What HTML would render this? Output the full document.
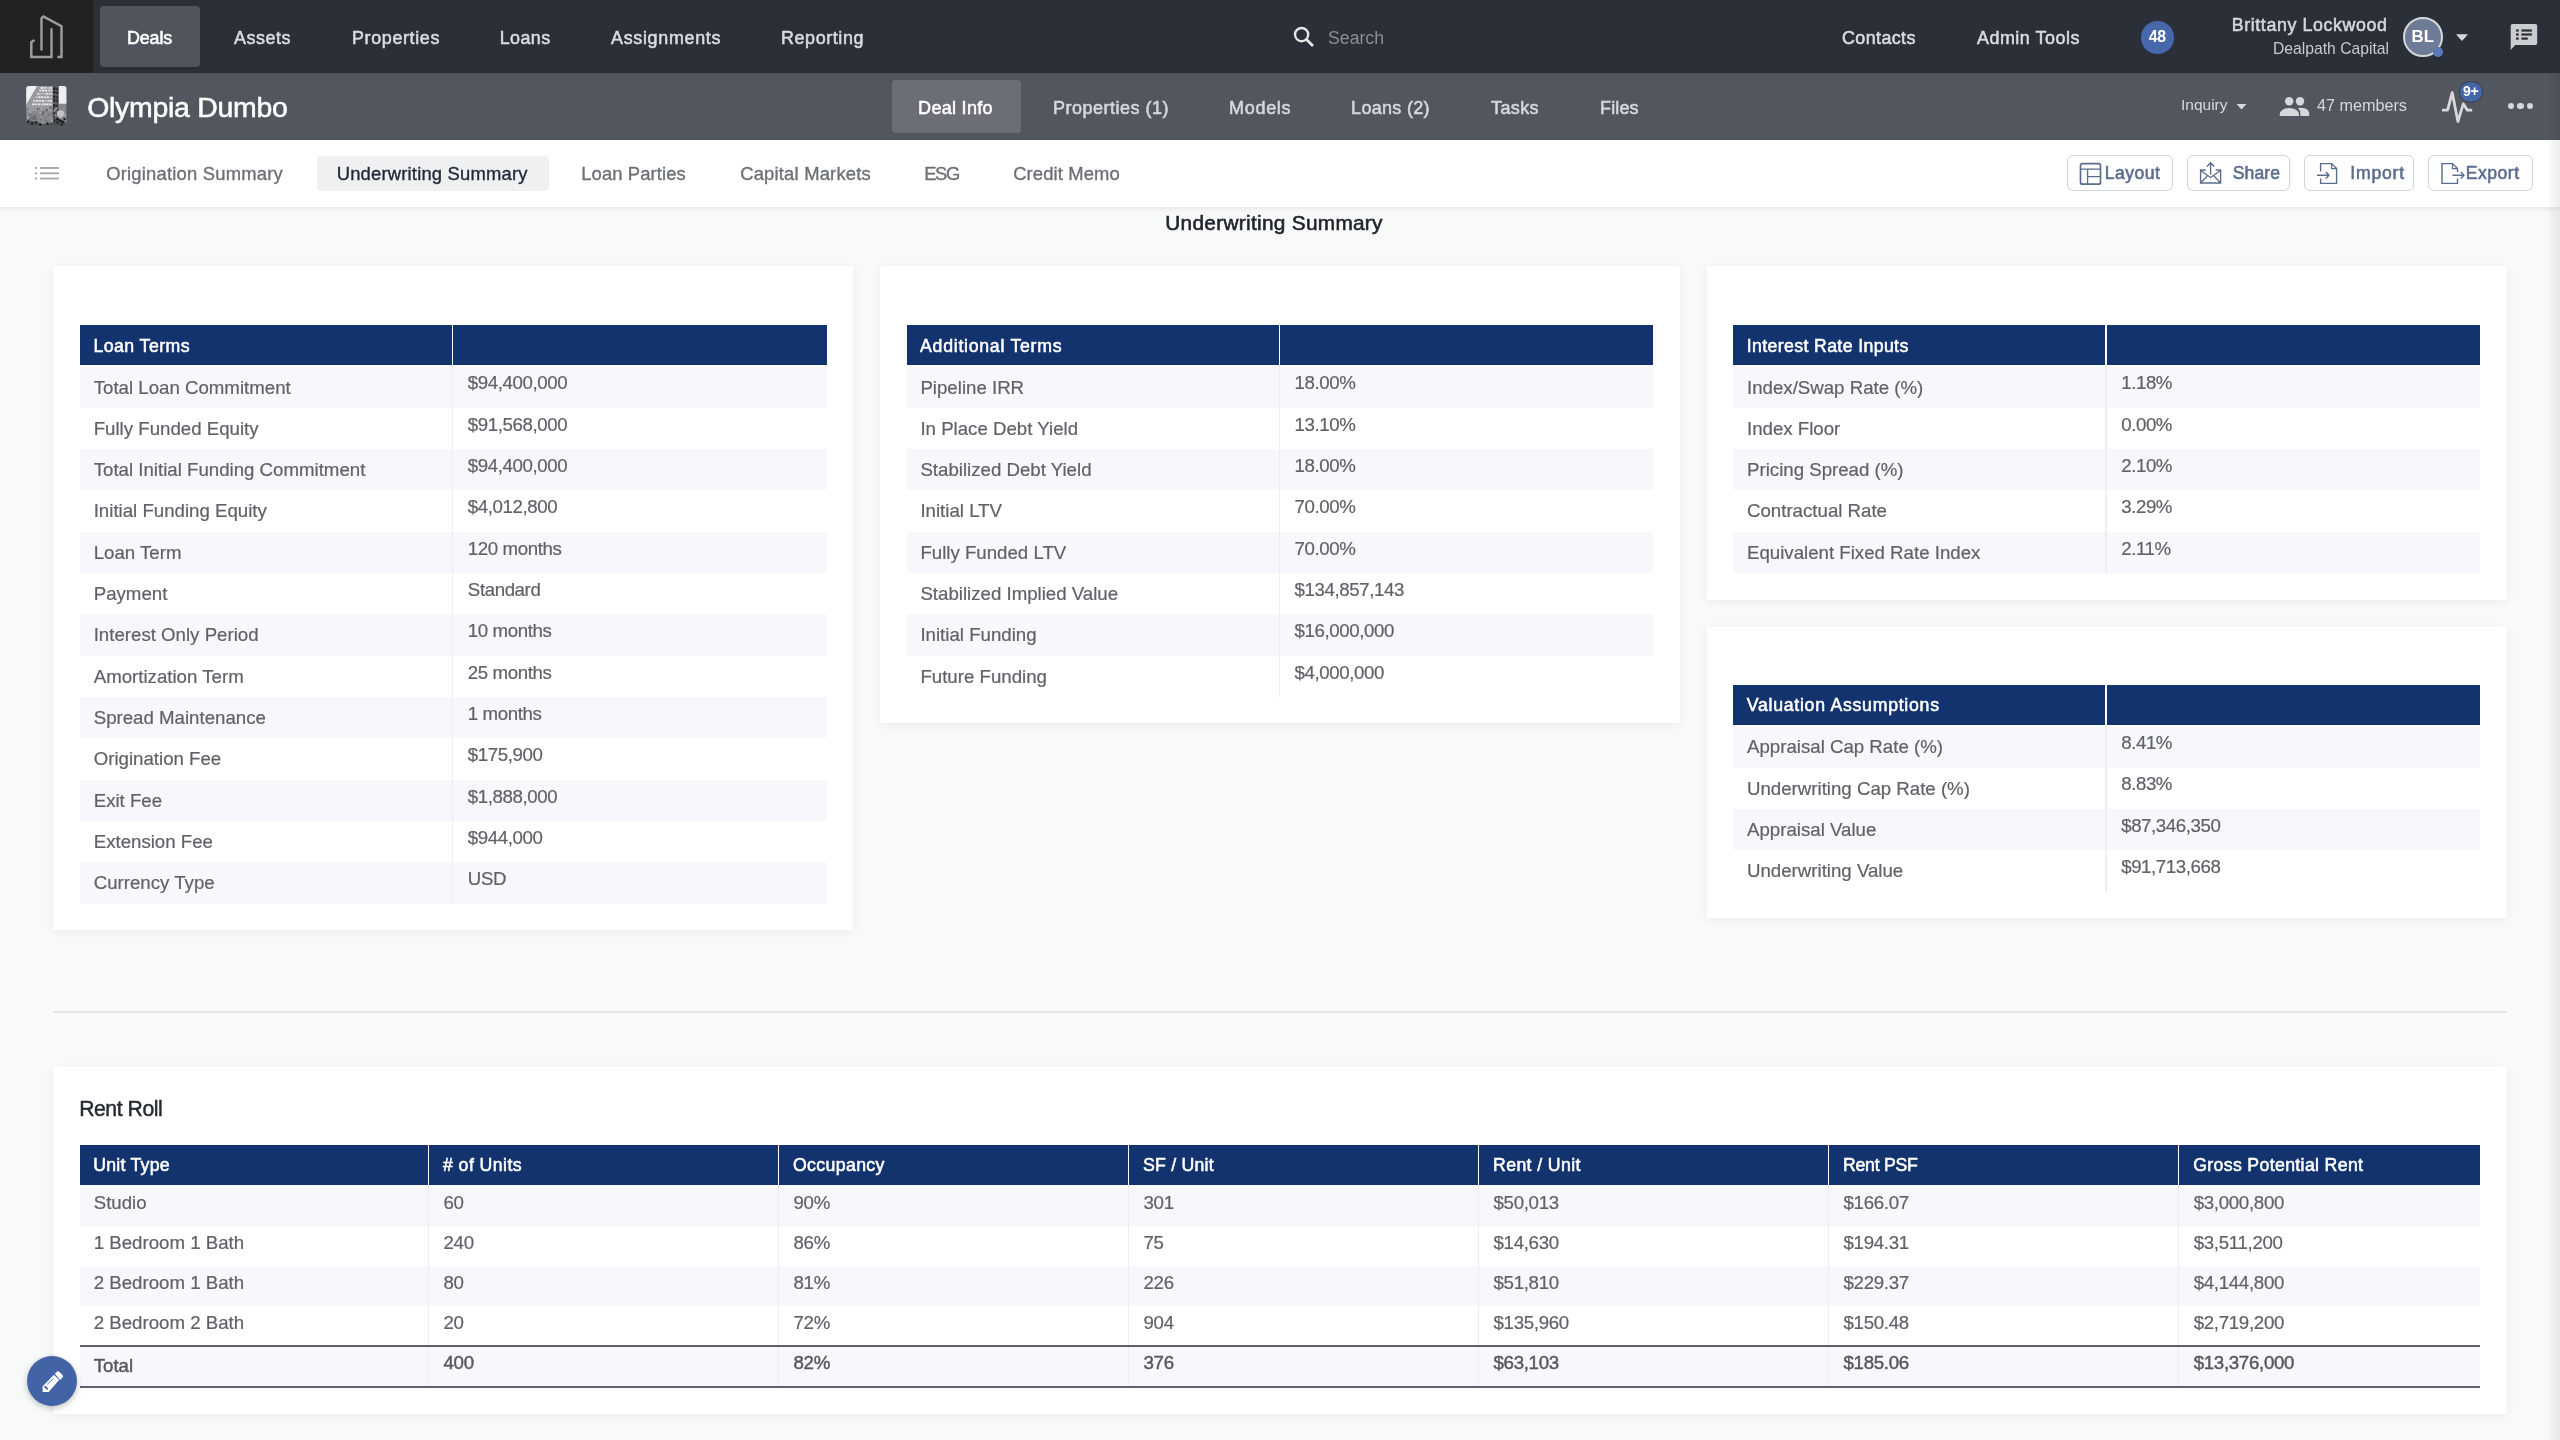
<!DOCTYPE html>
<html><head><meta charset="utf-8"><title>Underwriting Summary</title>
<style>
html,body{margin:0;padding:0;}
body{width:2560px;height:1440px;overflow:hidden;position:relative;background:#f8f9f9;font-family:"Liberation Sans",sans-serif;}
.t{position:absolute;white-space:nowrap;line-height:1;}
.r{position:absolute;}
#root{position:absolute;left:0;top:0;width:2560px;height:1440px;overflow:hidden;background:#f8f9f9;filter:contrast(1);}
</style></head><body>
<div id="root">
<div class="r" style="left:0.00px;top:0.00px;width:2560.00px;height:73.00px;background:#2a2f38"></div>
<div class="r" style="left:0.00px;top:0.00px;width:93.00px;height:73.00px;background:#222222"></div>
<svg class="r" style="left:0;top:0" width="93" height="73" viewBox="0 0 93 73"><path d="M34.6 40 L31.3 42.1 L31.3 57 L51.5 57 L51.5 28.2" fill="none" stroke="#9a9b9d" stroke-width="2.5" stroke-linejoin="miter"/><path d="M41.5 50.6 L41.5 18.2 L43.5 16.6 L61.5 26.2 L61.5 57 L57.4 57" fill="none" stroke="#9a9b9d" stroke-width="2.5" stroke-linejoin="miter"/></svg>
<div class="r" style="left:100.00px;top:6.00px;width:100.00px;height:61.00px;background:#50545c;border-radius:4px"></div>
<div class="t" style="left:127.00px;top:30.05px;font-size:17.9px;color:#ffffff;font-weight:400;-webkit-text-stroke:0.55px #ffffff;letter-spacing:-0.125px;">Deals</div>
<div class="t" style="left:234.00px;top:30.05px;font-size:17.9px;color:#dadcdf;font-weight:400;-webkit-text-stroke:0.55px #dadcdf;letter-spacing:0.550px;">Assets</div>
<div class="t" style="left:352.00px;top:30.05px;font-size:17.9px;color:#dadcdf;font-weight:400;-webkit-text-stroke:0.55px #dadcdf;letter-spacing:0.650px;">Properties</div>
<div class="t" style="left:499.70px;top:30.05px;font-size:17.9px;color:#dadcdf;font-weight:400;-webkit-text-stroke:0.55px #dadcdf;letter-spacing:0.425px;">Loans</div>
<div class="t" style="left:611.00px;top:30.05px;font-size:17.9px;color:#dadcdf;font-weight:400;-webkit-text-stroke:0.55px #dadcdf;letter-spacing:0.700px;">Assignments</div>
<div class="t" style="left:781.00px;top:30.05px;font-size:17.9px;color:#dadcdf;font-weight:400;-webkit-text-stroke:0.55px #dadcdf;letter-spacing:0.606px;">Reporting</div>
<svg class="r" style="left:1292px;top:25px" width="24" height="24" viewBox="0 0 24 24"><circle cx="9.6" cy="9.6" r="6.6" fill="none" stroke="#e6e6e6" stroke-width="2.4"/><path d="M14.5 14.5 L21 21" stroke="#e6e6e6" stroke-width="2.8" stroke-linecap="butt"/></svg>
<div class="t" style="left:1328.00px;top:30.02px;font-size:17.7px;color:#8b8f95;font-weight:400;">Search</div>
<div class="t" style="left:1842.00px;top:30.05px;font-size:17.9px;color:#dadcdf;font-weight:400;-webkit-text-stroke:0.55px #dadcdf;letter-spacing:0.400px;">Contacts</div>
<div class="t" style="left:1977.00px;top:30.05px;font-size:17.9px;color:#dadcdf;font-weight:400;-webkit-text-stroke:0.55px #dadcdf;letter-spacing:0.525px;">Admin Tools</div>
<div class="r" style="left:2141.00px;top:21.00px;width:32.50px;height:32.50px;background:#4667aa;border-radius:50%"></div>
<div class="t" style="left:2141px;top:29.43px;width:32.5px;text-align:center;font-size:15.8px;font-weight:700;color:#fff;letter-spacing:-0.2px">48</div>
<div class="t" style="left:2231.70px;top:16.73px;font-size:17.8px;color:#d6d7d9;font-weight:400;-webkit-text-stroke:0.55px #d6d7d9;letter-spacing:0.625px;">Brittany Lockwood</div>
<div class="t" style="right:171px;top:41.41px;font-size:15.7px;font-weight:400;color:#c9cbce;text-align:right">Dealpath Capital</div>
<div class="r" style="left:2402.50px;top:16.80px;width:40.50px;height:40.50px;background:#6d7b97;border-radius:50%;box-sizing:border-box;border:2.8px solid #d6d7da"></div>
<div class="t" style="left:2402.5px;top:29.38px;width:40.5px;text-align:center;font-size:16.8px;font-weight:700;color:#fff">BL</div>
<div class="r" style="left:2433.00px;top:47.00px;width:9.50px;height:9.50px;background:#5878b8;border-radius:50%"></div>
<svg class="r" style="left:2455px;top:33px" width="14" height="9" viewBox="0 0 14 9"><path d="M1 1.2 L13 1.2 L7 8 Z" fill="#d6d7d9"/></svg>
<svg class="r" style="left:2509px;top:23px" width="30" height="30" viewBox="0 0 30 30"><path d="M3.6 1 H26.4 Q28.2 1 28.2 2.8 V20.2 Q28.2 22 26.4 22 H6.2 L1.7 27 V2.8 Q1.7 1 3.6 1 Z" fill="#cbcccf"/><g fill="#2a2f38"><rect x="7" y="6.4" width="2.7" height="2.2"/><rect x="12.4" y="6.4" width="10.5" height="2.2"/><rect x="7" y="10.4" width="2.7" height="2.2"/><rect x="12.4" y="10.4" width="10.5" height="2.2"/><rect x="7" y="14.5" width="2.7" height="2.2"/><rect x="12.4" y="14.5" width="6.4" height="2.2"/></g></svg>
<div class="r" style="left:0.00px;top:73.00px;width:2560.00px;height:67.00px;background:#52565e"></div>
<svg class="r" style="left:26.25px;top:86.25px" width="40.75" height="40.5" viewBox="0 0 40 40"><defs><clipPath id="tc"><rect x="0" y="0" width="40" height="40" rx="3"/></clipPath></defs><g clip-path="url(#tc)"><rect width="40" height="40" fill="#85878b"/><path d="M0 0 H11 L0 19 Z" fill="#eef0f2"/><rect x="32" y="0" width="8" height="17.5" fill="#eceef0"/><path d="M11 0 H27 V25 H0 V19 Z" fill="#989a9e"/><rect x="14.5" y="1.0" width="2.2" height="1.8" fill="#f2f3f4"/><rect x="17.3" y="1.0" width="2.2" height="1.8" fill="#d9dadc"/><rect x="20.1" y="1.0" width="2.2" height="1.8" fill="#bcbec1"/><rect x="22.9" y="1.0" width="2.2" height="1.8" fill="#e6e7e9"/><rect x="25.7" y="1.0" width="2.2" height="1.8" fill="#e6e7e9"/><rect x="13.0" y="3.6" width="2.2" height="1.8" fill="#e6e7e9"/><rect x="15.8" y="3.6" width="2.2" height="1.8" fill="#f2f3f4"/><rect x="18.6" y="3.6" width="2.2" height="1.8" fill="#e6e7e9"/><rect x="21.4" y="3.6" width="2.2" height="1.8" fill="#d9dadc"/><rect x="24.2" y="3.6" width="2.2" height="1.8" fill="#e6e7e9"/><rect x="11.0" y="6.8" width="2.2" height="1.8" fill="#e6e7e9"/><rect x="13.8" y="6.8" width="2.2" height="1.8" fill="#bcbec1"/><rect x="16.6" y="6.8" width="2.2" height="1.8" fill="#bcbec1"/><rect x="19.4" y="6.8" width="2.2" height="1.8" fill="#e6e7e9"/><rect x="22.2" y="6.8" width="2.2" height="1.8" fill="#d9dadc"/><rect x="25.0" y="6.8" width="2.2" height="1.8" fill="#e6e7e9"/><rect x="9.0" y="10.2" width="2.2" height="1.8" fill="#bcbec1"/><rect x="11.8" y="10.2" width="2.2" height="1.8" fill="#e6e7e9"/><rect x="14.6" y="10.2" width="2.2" height="1.8" fill="#e6e7e9"/><rect x="17.4" y="10.2" width="2.2" height="1.8" fill="#d9dadc"/><rect x="20.2" y="10.2" width="2.2" height="1.8" fill="#e6e7e9"/><rect x="23.0" y="10.2" width="2.2" height="1.8" fill="#bcbec1"/><rect x="25.8" y="10.2" width="2.2" height="1.8" fill="#e6e7e9"/><rect x="7.0" y="13.8" width="2.2" height="1.8" fill="#d9dadc"/><rect x="9.8" y="13.8" width="2.2" height="1.8" fill="#e6e7e9"/><rect x="12.6" y="13.8" width="2.2" height="1.8" fill="#d9dadc"/><rect x="15.4" y="13.8" width="2.2" height="1.8" fill="#f2f3f4"/><rect x="18.2" y="13.8" width="2.2" height="1.8" fill="#bcbec1"/><rect x="21.0" y="13.8" width="2.2" height="1.8" fill="#d9dadc"/><rect x="23.8" y="13.8" width="2.2" height="1.8" fill="#e6e7e9"/><rect x="6.0" y="17.2" width="2.2" height="1.8" fill="#f2f3f4"/><rect x="8.8" y="17.2" width="2.2" height="1.8" fill="#d9dadc"/><rect x="11.6" y="17.2" width="2.2" height="1.8" fill="#e6e7e9"/><rect x="14.4" y="17.2" width="2.2" height="1.8" fill="#d9dadc"/><rect x="17.2" y="17.2" width="2.2" height="1.8" fill="#f2f3f4"/><rect x="20.0" y="17.2" width="2.2" height="1.8" fill="#e6e7e9"/><rect x="22.8" y="17.2" width="2.2" height="1.8" fill="#e6e7e9"/><rect x="25.6" y="17.2" width="2.2" height="1.8" fill="#e6e7e9"/><rect x="26.2" y="0" width="6" height="40" fill="#5a5c60"/><rect x="26.8" y="1.5" width="2" height="2.4" fill="#17181a"/><rect x="29.6" y="2.1" width="1.8" height="2.2" fill="#2a2b2e"/><rect x="26.8" y="5.0" width="2" height="2.4" fill="#17181a"/><rect x="29.6" y="5.6" width="1.8" height="2.2" fill="#2a2b2e"/><rect x="26.8" y="9.5" width="2" height="2.4" fill="#17181a"/><rect x="29.6" y="10.1" width="1.8" height="2.2" fill="#2a2b2e"/><rect x="26.8" y="13.0" width="2" height="2.4" fill="#17181a"/><rect x="29.6" y="13.6" width="1.8" height="2.2" fill="#2a2b2e"/><rect x="26.8" y="18.0" width="2" height="2.4" fill="#17181a"/><rect x="29.6" y="18.6" width="1.8" height="2.2" fill="#2a2b2e"/><rect x="26.8" y="21.5" width="2" height="2.4" fill="#17181a"/><rect x="29.6" y="22.1" width="1.8" height="2.2" fill="#2a2b2e"/><rect x="26.8" y="25.0" width="2" height="2.4" fill="#17181a"/><rect x="29.6" y="25.6" width="1.8" height="2.2" fill="#2a2b2e"/><rect x="26.8" y="29.0" width="2" height="2.4" fill="#17181a"/><rect x="29.6" y="29.6" width="1.8" height="2.2" fill="#2a2b2e"/><rect x="26.8" y="33.0" width="2" height="2.4" fill="#17181a"/><rect x="29.6" y="33.6" width="1.8" height="2.2" fill="#2a2b2e"/><rect x="23.5" y="28.4" width="2" height="2" fill="#5d5f63"/><rect x="16.2" y="25.0" width="2" height="2" fill="#5d5f63"/><rect x="35.1" y="25.9" width="2" height="2" fill="#95979b"/><rect x="30.2" y="32.3" width="2" height="2" fill="#95979b"/><rect x="3.1" y="24.7" width="2" height="2" fill="#a9abaf"/><rect x="33.3" y="32.9" width="2" height="2" fill="#7c7e82"/><rect x="23.1" y="20.4" width="2" height="2" fill="#5d5f63"/><rect x="15.9" y="33.4" width="2" height="2" fill="#95979b"/><rect x="35.5" y="27.0" width="2" height="2" fill="#6e7074"/><rect x="29.1" y="29.9" width="2" height="2" fill="#7c7e82"/><rect x="12.9" y="25.7" width="2" height="2" fill="#a9abaf"/><rect x="22.0" y="27.7" width="2" height="2" fill="#6e7074"/><rect x="35.9" y="28.0" width="2" height="2" fill="#6e7074"/><rect x="2.3" y="32.3" width="2" height="2" fill="#5d5f63"/><rect x="37.7" y="34.6" width="2" height="2" fill="#7c7e82"/><rect x="27.2" y="35.9" width="2" height="2" fill="#7c7e82"/><rect x="0.9" y="27.8" width="2" height="2" fill="#95979b"/><rect x="23.2" y="28.4" width="2" height="2" fill="#95979b"/><rect x="29.2" y="21.5" width="2" height="2" fill="#95979b"/><rect x="15.1" y="36.4" width="2" height="2" fill="#a9abaf"/><rect x="3.1" y="27.5" width="2" height="2" fill="#5d5f63"/><rect x="10.6" y="21.6" width="2" height="2" fill="#a9abaf"/><rect x="32.8" y="24.3" width="2" height="2" fill="#a9abaf"/><rect x="37.5" y="32.0" width="2" height="2" fill="#a9abaf"/><rect x="36.4" y="21.9" width="2" height="2" fill="#95979b"/><rect x="5.7" y="31.5" width="2" height="2" fill="#6e7074"/><rect x="18.4" y="30.2" width="2" height="2" fill="#7c7e82"/><rect x="10.7" y="21.8" width="2" height="2" fill="#5d5f63"/><rect x="14.0" y="29.8" width="2" height="2" fill="#95979b"/><rect x="26.2" y="28.8" width="2" height="2" fill="#5d5f63"/><rect x="24.9" y="33.1" width="2" height="2" fill="#a9abaf"/><rect x="34.2" y="33.8" width="2" height="2" fill="#5d5f63"/><rect x="14.9" y="26.6" width="2" height="2" fill="#6e7074"/><rect x="18.3" y="26.6" width="2" height="2" fill="#95979b"/><rect x="2.6" y="23.0" width="2" height="2" fill="#95979b"/><rect x="4.2" y="30.4" width="2" height="2" fill="#6e7074"/><rect x="0.0" y="21.9" width="2" height="2" fill="#6e7074"/><rect x="36.1" y="30.7" width="2" height="2" fill="#6e7074"/><rect x="33.2" y="30.7" width="2" height="2" fill="#95979b"/><rect x="24.1" y="37.2" width="2" height="2" fill="#5d5f63"/><rect x="13.8" y="21.3" width="2" height="2" fill="#a9abaf"/><rect x="37.7" y="27.9" width="2" height="2" fill="#a9abaf"/><rect x="11.9" y="21.7" width="2" height="2" fill="#7c7e82"/><rect x="28.1" y="28.1" width="2" height="2" fill="#95979b"/><rect x="19.6" y="22.9" width="2" height="2" fill="#5d5f63"/><rect x="13.7" y="32.1" width="2" height="2" fill="#6e7074"/><rect x="28.8" y="24.7" width="2" height="2" fill="#6e7074"/><rect x="26.5" y="24.0" width="2" height="2" fill="#7c7e82"/><rect x="34.5" y="25.8" width="2" height="2" fill="#95979b"/><rect x="20.2" y="33.8" width="2" height="2" fill="#7c7e82"/><rect x="24.2" y="30.7" width="2" height="2" fill="#95979b"/><rect x="30.6" y="34.5" width="2" height="2" fill="#95979b"/><rect x="7.6" y="28.4" width="2" height="2" fill="#6e7074"/><rect x="37.6" y="34.0" width="2" height="2" fill="#a9abaf"/><rect x="9.8" y="32.2" width="2" height="2" fill="#7c7e82"/><rect x="17.0" y="36.8" width="2" height="2" fill="#7c7e82"/><rect x="36.3" y="25.9" width="2" height="2" fill="#95979b"/><rect x="3.9" y="27.9" width="2" height="2" fill="#7c7e82"/><rect x="7.8" y="30.9" width="2" height="2" fill="#5d5f63"/><rect x="31.9" y="28.1" width="2" height="2" fill="#7c7e82"/><rect x="30.4" y="20.6" width="2" height="2" fill="#6e7074"/><rect x="34.6" y="33.9" width="2" height="2" fill="#95979b"/><rect x="18.2" y="22.4" width="2" height="2" fill="#7c7e82"/><rect x="3.3" y="37.0" width="2" height="2" fill="#a9abaf"/><rect x="17.6" y="33.1" width="2" height="2" fill="#6e7074"/><rect x="27.5" y="22.2" width="2" height="2" fill="#95979b"/><rect x="1.0" y="30.2" width="2" height="2" fill="#a9abaf"/><rect x="30.6" y="21.8" width="2" height="2" fill="#5d5f63"/><rect x="37.3" y="31.5" width="2" height="2" fill="#7c7e82"/><rect x="5.9" y="29.4" width="2" height="2" fill="#6e7074"/><path d="M0 35 Q6 33 12 36 T24 36.5 T40 35.5 V40 H0 Z" fill="#4e5054"/><rect x="1" y="34" width="2" height="2" fill="#151618"/><rect x="5" y="36" width="2" height="2" fill="#151618"/><rect x="9" y="35" width="2" height="2" fill="#151618"/><rect x="13" y="37" width="2" height="2" fill="#151618"/><rect x="20" y="36" width="2" height="2" fill="#151618"/><rect x="30" y="35" width="2" height="2" fill="#151618"/><rect x="34" y="37" width="2" height="2" fill="#151618"/><rect x="37" y="32" width="2" height="2" fill="#151618"/><circle cx="34" cy="27.5" r="3.6" fill="#c3c4c6"/><path d="M30 31 L38 35 L37 37 L29 33 Z" fill="#1d1e20"/></g></svg>
<div class="t" style="left:87.20px;top:92.56px;font-size:28.4px;color:#ffffff;font-weight:400;-webkit-text-stroke:0.55px #fff;letter-spacing:-0.25px;">Olympia Dumbo</div>
<div class="r" style="left:892.00px;top:80.00px;width:129.00px;height:53.00px;background:#6b6e74;border-radius:4px"></div>
<div class="t" style="left:918.10px;top:99.06px;font-size:18.0px;color:#ffffff;font-weight:400;-webkit-text-stroke:0.55px #ffffff;letter-spacing:0.300px;">Deal Info</div>
<div class="t" style="left:1053.10px;top:99.06px;font-size:18.0px;color:#d6d8db;font-weight:400;-webkit-text-stroke:0.55px #d6d8db;letter-spacing:0.492px;">Properties (1)</div>
<div class="t" style="left:1229.10px;top:99.06px;font-size:18.0px;color:#d6d8db;font-weight:400;-webkit-text-stroke:0.55px #d6d8db;letter-spacing:0.680px;">Models</div>
<div class="t" style="left:1351.10px;top:99.06px;font-size:18.0px;color:#d6d8db;font-weight:400;-webkit-text-stroke:0.55px #d6d8db;letter-spacing:0.300px;">Loans (2)</div>
<div class="t" style="left:1491.10px;top:99.06px;font-size:18.0px;color:#d6d8db;font-weight:400;-webkit-text-stroke:0.55px #d6d8db;letter-spacing:0.363px;">Tasks</div>
<div class="t" style="left:1600.10px;top:99.06px;font-size:18.0px;color:#d6d8db;font-weight:400;-webkit-text-stroke:0.55px #d6d8db;letter-spacing:0.113px;">Files</div>
<div class="t" style="left:2181.00px;top:97.18px;font-size:15.5px;color:#d6d8db;font-weight:400;">Inquiry</div>
<svg class="r" style="left:2236px;top:103px" width="11" height="8" viewBox="0 0 11 8"><path d="M0.5 1 L10.5 1 L5.5 6.5 Z" fill="#d6d8db"/></svg>
<svg class="r" style="left:2279px;top:96px" width="32" height="21" viewBox="0 0 32 21"><circle cx="10.2" cy="5.25" r="4.2" fill="#d6d8db"/><circle cx="21" cy="5.25" r="4.2" fill="#d6d8db"/><path d="M0.75 20 V18.2 A9.63 6.4 0 0 1 20 18.2 V20 Z" fill="#d6d8db"/><path d="M21.4 20 V18 Q21.4 14.2 18.9 12.1 Q20.1 11.8 21.6 11.8 Q30.25 11.8 30.25 18 V20 Z" fill="#d6d8db"/></svg>
<div class="t" style="left:2317.00px;top:96.59px;font-size:16.2px;color:#d6d8db;font-weight:400;">47 members</div>
<svg class="r" style="left:2441px;top:90px" width="33" height="34" viewBox="0 0 33 34"><path d="M1 20.1 H6.6 L11.2 2.6 L16.9 31.6 L22.2 13.9 L26.4 20.1 H31.2" fill="none" stroke="#d6d8db" stroke-width="2.8" stroke-linejoin="round" stroke-linecap="butt"/></svg>
<div class="r" style="left:2458.60px;top:81.30px;width:24.00px;height:21.40px;background:#4467a9;border-radius:50%;border:1.6px solid #3b3f47;box-sizing:border-box"></div>
<div class="t" style="left:2458.6px;top:83.95px;width:24px;text-align:center;font-size:14px;font-weight:700;color:#fff;letter-spacing:-0.3px">9+</div>
<div class="r" style="left:2507.90px;top:103.00px;width:6.20px;height:6.20px;background:#d6d8db;border-radius:50%"></div>
<div class="r" style="left:2517.40px;top:103.00px;width:6.20px;height:6.20px;background:#d6d8db;border-radius:50%"></div>
<div class="r" style="left:2526.90px;top:103.00px;width:6.20px;height:6.20px;background:#d6d8db;border-radius:50%"></div>
<div class="r" style="left:0.00px;top:140.00px;width:2560.00px;height:67.00px;background:#ffffff;box-shadow:0 2px 5px rgba(0,0,0,0.08)"></div>
<svg class="r" style="left:34px;top:165px" width="26" height="16" viewBox="0 0 26 16"><g fill="#a9adb3"><rect x="1" y="2" width="2.2" height="2"/><rect x="6" y="2" width="19" height="2"/><rect x="1" y="7.3" width="2.2" height="2"/><rect x="6" y="7.3" width="19" height="2"/><rect x="1" y="12.5" width="2.2" height="2"/><rect x="6" y="12.5" width="19" height="2"/></g></svg>
<div class="r" style="left:317.00px;top:155.60px;width:232.00px;height:35.00px;background:#eff0f2;border-radius:4px"></div>
<div class="t" style="left:106.20px;top:165.12px;font-size:18.4px;color:#6c7076;font-weight:400;-webkit-text-stroke:0.35px #6c7076;letter-spacing:0.214px;">Origination Summary</div>
<div class="t" style="left:336.70px;top:165.12px;font-size:18.4px;color:#222a38;font-weight:400;-webkit-text-stroke:0.35px #222a38;letter-spacing:0.197px;">Underwriting Summary</div>
<div class="t" style="left:581.20px;top:165.12px;font-size:18.4px;color:#6c7076;font-weight:400;-webkit-text-stroke:0.35px #6c7076;letter-spacing:0.123px;">Loan Parties</div>
<div class="t" style="left:740.20px;top:165.12px;font-size:18.4px;color:#6c7076;font-weight:400;-webkit-text-stroke:0.35px #6c7076;letter-spacing:0.200px;">Capital Markets</div>
<div class="t" style="left:924.20px;top:165.12px;font-size:18.4px;color:#6c7076;font-weight:400;-webkit-text-stroke:0.35px #6c7076;letter-spacing:-1.350px;">ESG</div>
<div class="t" style="left:1013.20px;top:165.12px;font-size:18.4px;color:#6c7076;font-weight:400;-webkit-text-stroke:0.35px #6c7076;letter-spacing:0.135px;">Credit Memo</div>
<div class="r" style="left:2067.00px;top:154.80px;width:105.50px;height:36.60px;box-sizing:border-box;border:1.6px solid #cfd5dd;border-radius:6px;background:#fff"></div>
<div class="t" style="left:2104.70px;top:165.00px;font-size:17.6px;color:#5b6c8d;font-weight:400;-webkit-text-stroke:0.55px #5b6c8d;letter-spacing:0.460px;">Layout</div>
<svg class="r" style="left:2079px;top:161.5px" width="24" height="24" viewBox="0 0 24 24"><rect x="1.5" y="1.6" width="20" height="20.6" rx="2" fill="none" stroke="#5b6c8d" stroke-width="1.7"/><path d="M1.5 7.2 H21.5 M8.6 7.2 V22.2 M8.6 14.6 H21.5" stroke="#5b6c8d" stroke-width="1.3" fill="none"/></svg>
<div class="r" style="left:2187.00px;top:154.80px;width:103.00px;height:36.60px;box-sizing:border-box;border:1.6px solid #cfd5dd;border-radius:6px;background:#fff"></div>
<div class="t" style="left:2232.70px;top:165.00px;font-size:17.6px;color:#5b6c8d;font-weight:400;-webkit-text-stroke:0.55px #5b6c8d;letter-spacing:0.125px;">Share</div>
<svg class="r" style="left:2199px;top:161px" width="24" height="24" viewBox="0 0 24 24"><path d="M6.8 9 H1.6 V22 H21.6 V9 H16.6" fill="none" stroke="#5b6c8d" stroke-width="1.4"/><path d="M1.6 9.5 L11.6 16.5 L21.6 9.5 M1.8 21.8 L8.2 15 M21.4 21.8 L15 15" fill="none" stroke="#5b6c8d" stroke-width="1.3"/><path d="M11.6 13.5 V1.8 M8 5.4 L11.6 1.8 L15.2 5.4" fill="none" stroke="#5b6c8d" stroke-width="1.4"/></svg>
<div class="r" style="left:2304.30px;top:154.80px;width:109.70px;height:36.60px;box-sizing:border-box;border:1.6px solid #cfd5dd;border-radius:6px;background:#fff"></div>
<div class="t" style="left:2350.30px;top:165.00px;font-size:17.6px;color:#5b6c8d;font-weight:400;-webkit-text-stroke:0.55px #5b6c8d;letter-spacing:0.790px;">Import</div>
<svg class="r" style="left:2316px;top:162px" width="24" height="24" viewBox="0 0 24 24"><path d="M4.6 9.5 V1.6 H15.6 L20.6 6.6 V21.4 H4.6 V16.5" fill="none" stroke="#5b6c8d" stroke-width="1.4"/><path d="M15.6 1.6 V6.6 H20.6" fill="none" stroke="#5b6c8d" stroke-width="1.2"/><path d="M1 13.2 H13 M9.8 10 L13 13.2 L9.8 16.4" fill="none" stroke="#5b6c8d" stroke-width="1.4"/></svg>
<div class="r" style="left:2428.30px;top:154.80px;width:104.50px;height:36.60px;box-sizing:border-box;border:1.6px solid #cfd5dd;border-radius:6px;background:#fff"></div>
<div class="t" style="left:2465.70px;top:165.00px;font-size:17.6px;color:#5b6c8d;font-weight:400;-webkit-text-stroke:0.55px #5b6c8d;letter-spacing:0.520px;">Export</div>
<svg class="r" style="left:2440px;top:162px" width="26" height="24" viewBox="0 0 26 24"><path d="M17.5 10 V6.6 L12.5 1.6 H2 V21.4 H17.5 V16.5" fill="none" stroke="#5b6c8d" stroke-width="1.4"/><path d="M12.5 1.6 V6.6 H17.5" fill="none" stroke="#5b6c8d" stroke-width="1.2"/><path d="M12.5 13.2 H24 M20.8 10 L24 13.2 L20.8 16.4" fill="none" stroke="#5b6c8d" stroke-width="1.4"/></svg>
<div class="t" style="left:1165.30px;top:212.99px;font-size:20.8px;color:#1f242c;font-weight:400;-webkit-text-stroke:0.6px #1f242c;letter-spacing:0.300px;">Underwriting Summary</div>
<div class="r" style="left:53.00px;top:266.40px;width:800.00px;height:663.60px;background:#fff;box-shadow:0 2px 9px rgba(0,0,0,0.055)"></div>
<div class="r" style="left:80.00px;top:325.30px;width:746.67px;height:40.00px;background:#13336e"></div>
<div class="t" style="left:93.40px;top:337.52px;font-size:17.7px;color:#ffffff;font-weight:400;-webkit-text-stroke:0.55px #ffffff;letter-spacing:0.456px;">Loan Terms</div>
<div class="r" style="left:452.00px;top:325.30px;width:1.33px;height:40.00px;background:#ffffff"></div>
<div class="r" style="left:80.00px;top:366.30px;width:746.67px;height:41.33px;background:#f7f8fb"></div>
<div class="t" style="left:93.70px;top:378.50px;font-size:18.67px;color:#5f6268;font-weight:400;-webkit-text-stroke:0.2px #5f6268;">Total Loan Commitment</div>
<div class="t" style="left:467.87px;top:374.20px;font-size:18.67px;color:#5f6268;font-weight:400;letter-spacing:-0.4px;-webkit-text-stroke:0.2px #5f6268;">$94,400,000</div>
<div class="t" style="left:93.70px;top:419.83px;font-size:18.67px;color:#5f6268;font-weight:400;-webkit-text-stroke:0.2px #5f6268;">Fully Funded Equity</div>
<div class="t" style="left:467.87px;top:415.53px;font-size:18.67px;color:#5f6268;font-weight:400;letter-spacing:-0.4px;-webkit-text-stroke:0.2px #5f6268;">$91,568,000</div>
<div class="r" style="left:80.00px;top:448.97px;width:746.67px;height:41.33px;background:#f7f8fb"></div>
<div class="t" style="left:93.70px;top:461.16px;font-size:18.67px;color:#5f6268;font-weight:400;-webkit-text-stroke:0.2px #5f6268;">Total Initial Funding Commitment</div>
<div class="t" style="left:467.87px;top:456.86px;font-size:18.67px;color:#5f6268;font-weight:400;letter-spacing:-0.4px;-webkit-text-stroke:0.2px #5f6268;">$94,400,000</div>
<div class="t" style="left:93.70px;top:502.49px;font-size:18.67px;color:#5f6268;font-weight:400;-webkit-text-stroke:0.2px #5f6268;">Initial Funding Equity</div>
<div class="t" style="left:467.87px;top:498.19px;font-size:18.67px;color:#5f6268;font-weight:400;letter-spacing:-0.4px;-webkit-text-stroke:0.2px #5f6268;">$4,012,800</div>
<div class="r" style="left:80.00px;top:531.63px;width:746.67px;height:41.33px;background:#f7f8fb"></div>
<div class="t" style="left:93.70px;top:543.83px;font-size:18.67px;color:#5f6268;font-weight:400;-webkit-text-stroke:0.2px #5f6268;">Loan Term</div>
<div class="t" style="left:467.87px;top:539.53px;font-size:18.67px;color:#5f6268;font-weight:400;letter-spacing:-0.4px;-webkit-text-stroke:0.2px #5f6268;">120 months</div>
<div class="t" style="left:93.70px;top:585.16px;font-size:18.67px;color:#5f6268;font-weight:400;-webkit-text-stroke:0.2px #5f6268;">Payment</div>
<div class="t" style="left:467.87px;top:580.86px;font-size:18.67px;color:#5f6268;font-weight:400;letter-spacing:-0.4px;-webkit-text-stroke:0.2px #5f6268;">Standard</div>
<div class="r" style="left:80.00px;top:614.30px;width:746.67px;height:41.33px;background:#f7f8fb"></div>
<div class="t" style="left:93.70px;top:626.49px;font-size:18.67px;color:#5f6268;font-weight:400;-webkit-text-stroke:0.2px #5f6268;">Interest Only Period</div>
<div class="t" style="left:467.87px;top:622.19px;font-size:18.67px;color:#5f6268;font-weight:400;letter-spacing:-0.4px;-webkit-text-stroke:0.2px #5f6268;">10 months</div>
<div class="t" style="left:93.70px;top:667.83px;font-size:18.67px;color:#5f6268;font-weight:400;-webkit-text-stroke:0.2px #5f6268;">Amortization Term</div>
<div class="t" style="left:467.87px;top:663.53px;font-size:18.67px;color:#5f6268;font-weight:400;letter-spacing:-0.4px;-webkit-text-stroke:0.2px #5f6268;">25 months</div>
<div class="r" style="left:80.00px;top:696.96px;width:746.67px;height:41.33px;background:#f7f8fb"></div>
<div class="t" style="left:93.70px;top:709.16px;font-size:18.67px;color:#5f6268;font-weight:400;-webkit-text-stroke:0.2px #5f6268;">Spread Maintenance</div>
<div class="t" style="left:467.87px;top:704.86px;font-size:18.67px;color:#5f6268;font-weight:400;letter-spacing:-0.4px;-webkit-text-stroke:0.2px #5f6268;">1 months</div>
<div class="t" style="left:93.70px;top:750.49px;font-size:18.67px;color:#5f6268;font-weight:400;-webkit-text-stroke:0.2px #5f6268;">Origination Fee</div>
<div class="t" style="left:467.87px;top:746.19px;font-size:18.67px;color:#5f6268;font-weight:400;letter-spacing:-0.4px;-webkit-text-stroke:0.2px #5f6268;">$175,900</div>
<div class="r" style="left:80.00px;top:779.63px;width:746.67px;height:41.33px;background:#f7f8fb"></div>
<div class="t" style="left:93.70px;top:791.83px;font-size:18.67px;color:#5f6268;font-weight:400;-webkit-text-stroke:0.2px #5f6268;">Exit Fee</div>
<div class="t" style="left:467.87px;top:787.53px;font-size:18.67px;color:#5f6268;font-weight:400;letter-spacing:-0.4px;-webkit-text-stroke:0.2px #5f6268;">$1,888,000</div>
<div class="t" style="left:93.70px;top:833.16px;font-size:18.67px;color:#5f6268;font-weight:400;-webkit-text-stroke:0.2px #5f6268;">Extension Fee</div>
<div class="t" style="left:467.87px;top:828.86px;font-size:18.67px;color:#5f6268;font-weight:400;letter-spacing:-0.4px;-webkit-text-stroke:0.2px #5f6268;">$944,000</div>
<div class="r" style="left:80.00px;top:862.30px;width:746.67px;height:41.33px;background:#f7f8fb"></div>
<div class="t" style="left:93.70px;top:874.49px;font-size:18.67px;color:#5f6268;font-weight:400;-webkit-text-stroke:0.2px #5f6268;">Currency Type</div>
<div class="t" style="left:467.87px;top:870.19px;font-size:18.67px;color:#5f6268;font-weight:400;letter-spacing:-0.4px;-webkit-text-stroke:0.2px #5f6268;">USD</div>
<div class="r" style="left:452.00px;top:365.30px;width:1.33px;height:538.33px;background:#eceef1"></div>
<div class="r" style="left:880.00px;top:266.40px;width:800.00px;height:456.70px;background:#fff;box-shadow:0 2px 9px rgba(0,0,0,0.055)"></div>
<div class="r" style="left:906.70px;top:325.30px;width:746.67px;height:40.00px;background:#13336e"></div>
<div class="t" style="left:920.10px;top:337.52px;font-size:17.7px;color:#ffffff;font-weight:400;-webkit-text-stroke:0.55px #ffffff;letter-spacing:0.730px;">Additional Terms</div>
<div class="r" style="left:1278.70px;top:325.30px;width:1.33px;height:40.00px;background:#ffffff"></div>
<div class="r" style="left:906.70px;top:366.30px;width:746.67px;height:41.33px;background:#f7f8fb"></div>
<div class="t" style="left:920.40px;top:378.50px;font-size:18.67px;color:#5f6268;font-weight:400;-webkit-text-stroke:0.2px #5f6268;">Pipeline IRR</div>
<div class="t" style="left:1294.57px;top:374.20px;font-size:18.67px;color:#5f6268;font-weight:400;letter-spacing:-0.4px;-webkit-text-stroke:0.2px #5f6268;">18.00%</div>
<div class="t" style="left:920.40px;top:419.83px;font-size:18.67px;color:#5f6268;font-weight:400;-webkit-text-stroke:0.2px #5f6268;">In Place Debt Yield</div>
<div class="t" style="left:1294.57px;top:415.53px;font-size:18.67px;color:#5f6268;font-weight:400;letter-spacing:-0.4px;-webkit-text-stroke:0.2px #5f6268;">13.10%</div>
<div class="r" style="left:906.70px;top:448.97px;width:746.67px;height:41.33px;background:#f7f8fb"></div>
<div class="t" style="left:920.40px;top:461.16px;font-size:18.67px;color:#5f6268;font-weight:400;-webkit-text-stroke:0.2px #5f6268;">Stabilized Debt Yield</div>
<div class="t" style="left:1294.57px;top:456.86px;font-size:18.67px;color:#5f6268;font-weight:400;letter-spacing:-0.4px;-webkit-text-stroke:0.2px #5f6268;">18.00%</div>
<div class="t" style="left:920.40px;top:502.49px;font-size:18.67px;color:#5f6268;font-weight:400;-webkit-text-stroke:0.2px #5f6268;">Initial LTV</div>
<div class="t" style="left:1294.57px;top:498.19px;font-size:18.67px;color:#5f6268;font-weight:400;letter-spacing:-0.4px;-webkit-text-stroke:0.2px #5f6268;">70.00%</div>
<div class="r" style="left:906.70px;top:531.63px;width:746.67px;height:41.33px;background:#f7f8fb"></div>
<div class="t" style="left:920.40px;top:543.83px;font-size:18.67px;color:#5f6268;font-weight:400;-webkit-text-stroke:0.2px #5f6268;">Fully Funded LTV</div>
<div class="t" style="left:1294.57px;top:539.53px;font-size:18.67px;color:#5f6268;font-weight:400;letter-spacing:-0.4px;-webkit-text-stroke:0.2px #5f6268;">70.00%</div>
<div class="t" style="left:920.40px;top:585.16px;font-size:18.67px;color:#5f6268;font-weight:400;-webkit-text-stroke:0.2px #5f6268;">Stabilized Implied Value</div>
<div class="t" style="left:1294.57px;top:580.86px;font-size:18.67px;color:#5f6268;font-weight:400;letter-spacing:-0.4px;-webkit-text-stroke:0.2px #5f6268;">$134,857,143</div>
<div class="r" style="left:906.70px;top:614.30px;width:746.67px;height:41.33px;background:#f7f8fb"></div>
<div class="t" style="left:920.40px;top:626.49px;font-size:18.67px;color:#5f6268;font-weight:400;-webkit-text-stroke:0.2px #5f6268;">Initial Funding</div>
<div class="t" style="left:1294.57px;top:622.19px;font-size:18.67px;color:#5f6268;font-weight:400;letter-spacing:-0.4px;-webkit-text-stroke:0.2px #5f6268;">$16,000,000</div>
<div class="t" style="left:920.40px;top:667.83px;font-size:18.67px;color:#5f6268;font-weight:400;-webkit-text-stroke:0.2px #5f6268;">Future Funding</div>
<div class="t" style="left:1294.57px;top:663.53px;font-size:18.67px;color:#5f6268;font-weight:400;letter-spacing:-0.4px;-webkit-text-stroke:0.2px #5f6268;">$4,000,000</div>
<div class="r" style="left:1278.70px;top:365.30px;width:1.33px;height:331.66px;background:#eceef1"></div>
<div class="r" style="left:1707.00px;top:266.40px;width:800.00px;height:333.60px;background:#fff;box-shadow:0 2px 9px rgba(0,0,0,0.055)"></div>
<div class="r" style="left:1733.30px;top:325.30px;width:746.67px;height:40.00px;background:#13336e"></div>
<div class="t" style="left:1746.70px;top:337.52px;font-size:17.7px;color:#ffffff;font-weight:400;-webkit-text-stroke:0.55px #ffffff;letter-spacing:0.379px;">Interest Rate Inputs</div>
<div class="r" style="left:2105.30px;top:325.30px;width:1.33px;height:40.00px;background:#ffffff"></div>
<div class="r" style="left:1733.30px;top:366.30px;width:746.67px;height:41.33px;background:#f7f8fb"></div>
<div class="t" style="left:1747.00px;top:378.50px;font-size:18.67px;color:#5f6268;font-weight:400;-webkit-text-stroke:0.2px #5f6268;">Index/Swap Rate (%)</div>
<div class="t" style="left:2121.17px;top:374.20px;font-size:18.67px;color:#5f6268;font-weight:400;letter-spacing:-0.4px;-webkit-text-stroke:0.2px #5f6268;">1.18%</div>
<div class="t" style="left:1747.00px;top:419.83px;font-size:18.67px;color:#5f6268;font-weight:400;-webkit-text-stroke:0.2px #5f6268;">Index Floor</div>
<div class="t" style="left:2121.17px;top:415.53px;font-size:18.67px;color:#5f6268;font-weight:400;letter-spacing:-0.4px;-webkit-text-stroke:0.2px #5f6268;">0.00%</div>
<div class="r" style="left:1733.30px;top:448.97px;width:746.67px;height:41.33px;background:#f7f8fb"></div>
<div class="t" style="left:1747.00px;top:461.16px;font-size:18.67px;color:#5f6268;font-weight:400;-webkit-text-stroke:0.2px #5f6268;">Pricing Spread (%)</div>
<div class="t" style="left:2121.17px;top:456.86px;font-size:18.67px;color:#5f6268;font-weight:400;letter-spacing:-0.4px;-webkit-text-stroke:0.2px #5f6268;">2.10%</div>
<div class="t" style="left:1747.00px;top:502.49px;font-size:18.67px;color:#5f6268;font-weight:400;-webkit-text-stroke:0.2px #5f6268;">Contractual Rate</div>
<div class="t" style="left:2121.17px;top:498.19px;font-size:18.67px;color:#5f6268;font-weight:400;letter-spacing:-0.4px;-webkit-text-stroke:0.2px #5f6268;">3.29%</div>
<div class="r" style="left:1733.30px;top:531.63px;width:746.67px;height:41.33px;background:#f7f8fb"></div>
<div class="t" style="left:1747.00px;top:543.83px;font-size:18.67px;color:#5f6268;font-weight:400;-webkit-text-stroke:0.2px #5f6268;">Equivalent Fixed Rate Index</div>
<div class="t" style="left:2121.17px;top:539.53px;font-size:18.67px;color:#5f6268;font-weight:400;letter-spacing:-0.4px;-webkit-text-stroke:0.2px #5f6268;">2.11%</div>
<div class="r" style="left:2105.30px;top:365.30px;width:1.33px;height:207.66px;background:#eceef1"></div>
<div class="r" style="left:1707.00px;top:627.00px;width:800.00px;height:291.00px;background:#fff;box-shadow:0 2px 9px rgba(0,0,0,0.055)"></div>
<div class="r" style="left:1733.30px;top:685.20px;width:746.67px;height:40.00px;background:#13336e"></div>
<div class="t" style="left:1746.70px;top:697.42px;font-size:17.7px;color:#ffffff;font-weight:400;-webkit-text-stroke:0.55px #ffffff;letter-spacing:0.735px;">Valuation Assumptions</div>
<div class="r" style="left:2105.30px;top:685.20px;width:1.33px;height:40.00px;background:#ffffff"></div>
<div class="r" style="left:1733.30px;top:726.20px;width:746.67px;height:41.33px;background:#f7f8fb"></div>
<div class="t" style="left:1747.00px;top:738.40px;font-size:18.67px;color:#5f6268;font-weight:400;-webkit-text-stroke:0.2px #5f6268;">Appraisal Cap Rate (%)</div>
<div class="t" style="left:2121.17px;top:734.10px;font-size:18.67px;color:#5f6268;font-weight:400;letter-spacing:-0.4px;-webkit-text-stroke:0.2px #5f6268;">8.41%</div>
<div class="t" style="left:1747.00px;top:779.73px;font-size:18.67px;color:#5f6268;font-weight:400;-webkit-text-stroke:0.2px #5f6268;">Underwriting Cap Rate (%)</div>
<div class="t" style="left:2121.17px;top:775.43px;font-size:18.67px;color:#5f6268;font-weight:400;letter-spacing:-0.4px;-webkit-text-stroke:0.2px #5f6268;">8.83%</div>
<div class="r" style="left:1733.30px;top:808.87px;width:746.67px;height:41.33px;background:#f7f8fb"></div>
<div class="t" style="left:1747.00px;top:821.06px;font-size:18.67px;color:#5f6268;font-weight:400;-webkit-text-stroke:0.2px #5f6268;">Appraisal Value</div>
<div class="t" style="left:2121.17px;top:816.76px;font-size:18.67px;color:#5f6268;font-weight:400;letter-spacing:-0.4px;-webkit-text-stroke:0.2px #5f6268;">$87,346,350</div>
<div class="t" style="left:1747.00px;top:862.39px;font-size:18.67px;color:#5f6268;font-weight:400;-webkit-text-stroke:0.2px #5f6268;">Underwriting Value</div>
<div class="t" style="left:2121.17px;top:858.09px;font-size:18.67px;color:#5f6268;font-weight:400;letter-spacing:-0.4px;-webkit-text-stroke:0.2px #5f6268;">$91,713,668</div>
<div class="r" style="left:2105.30px;top:725.20px;width:1.33px;height:166.33px;background:#eceef1"></div>
<div class="r" style="left:53.00px;top:1010.50px;width:2454.00px;height:2.00px;background:#e4e6e8"></div>
<div class="r" style="left:53.00px;top:1066.70px;width:2454.00px;height:347.30px;background:#fff;box-shadow:0 2px 9px rgba(0,0,0,0.055)"></div>
<div class="t" style="left:79.20px;top:1098.45px;font-size:21.2px;color:#262b33;font-weight:400;-webkit-text-stroke:0.45px #262b33;letter-spacing:-0.456px;">Rent Roll</div>
<div class="r" style="left:80.00px;top:1145.30px;width:2400.00px;height:40.00px;background:#13336e"></div>
<div class="t" style="left:93.20px;top:1157.02px;font-size:17.7px;color:#ffffff;font-weight:400;-webkit-text-stroke:0.55px #ffffff;letter-spacing:0.250px;">Unit Type</div>
<div class="t" style="left:443.00px;top:1157.02px;font-size:17.7px;color:#ffffff;font-weight:400;-webkit-text-stroke:0.55px #ffffff;letter-spacing:0.433px;"># of Units</div>
<div class="r" style="left:427.63px;top:1145.30px;width:1.33px;height:40.00px;background:#ffffff"></div>
<div class="t" style="left:793.00px;top:1157.02px;font-size:17.7px;color:#ffffff;font-weight:400;-webkit-text-stroke:0.55px #ffffff;letter-spacing:0.363px;">Occupancy</div>
<div class="r" style="left:777.63px;top:1145.30px;width:1.33px;height:40.00px;background:#ffffff"></div>
<div class="t" style="left:1143.00px;top:1157.02px;font-size:17.7px;color:#ffffff;font-weight:400;-webkit-text-stroke:0.55px #ffffff;letter-spacing:0.225px;">SF / Unit</div>
<div class="r" style="left:1127.63px;top:1145.30px;width:1.33px;height:40.00px;background:#ffffff"></div>
<div class="t" style="left:1493.00px;top:1157.02px;font-size:17.7px;color:#ffffff;font-weight:400;-webkit-text-stroke:0.55px #ffffff;letter-spacing:0.385px;">Rent / Unit</div>
<div class="r" style="left:1477.63px;top:1145.30px;width:1.33px;height:40.00px;background:#ffffff"></div>
<div class="t" style="left:1843.00px;top:1157.02px;font-size:17.7px;color:#ffffff;font-weight:400;-webkit-text-stroke:0.55px #ffffff;letter-spacing:-0.257px;">Rent PSF</div>
<div class="r" style="left:1827.63px;top:1145.30px;width:1.33px;height:40.00px;background:#ffffff"></div>
<div class="t" style="left:2193.20px;top:1157.02px;font-size:17.7px;color:#ffffff;font-weight:400;-webkit-text-stroke:0.55px #ffffff;letter-spacing:0.350px;">Gross Potential Rent</div>
<div class="r" style="left:2177.83px;top:1145.30px;width:1.33px;height:40.00px;background:#ffffff"></div>
<div class="r" style="left:80.00px;top:1185.30px;width:2400.00px;height:41.30px;background:#f7f8fb"></div>
<div class="t" style="left:93.70px;top:1194.20px;font-size:18.67px;color:#5f6268;font-weight:400;-webkit-text-stroke:0.2px #5f6268;">Studio</div>
<div class="t" style="left:443.50px;top:1194.20px;font-size:18.67px;color:#5f6268;font-weight:400;letter-spacing:-0.3px;-webkit-text-stroke:0.2px #5f6268;">60</div>
<div class="t" style="left:793.50px;top:1194.20px;font-size:18.67px;color:#5f6268;font-weight:400;letter-spacing:-0.3px;-webkit-text-stroke:0.2px #5f6268;">90%</div>
<div class="t" style="left:1143.50px;top:1194.20px;font-size:18.67px;color:#5f6268;font-weight:400;letter-spacing:-0.3px;-webkit-text-stroke:0.2px #5f6268;">301</div>
<div class="t" style="left:1493.50px;top:1194.20px;font-size:18.67px;color:#5f6268;font-weight:400;letter-spacing:-0.3px;-webkit-text-stroke:0.2px #5f6268;">$50,013</div>
<div class="t" style="left:1843.50px;top:1194.20px;font-size:18.67px;color:#5f6268;font-weight:400;letter-spacing:-0.3px;-webkit-text-stroke:0.2px #5f6268;">$166.07</div>
<div class="t" style="left:2193.70px;top:1194.20px;font-size:18.67px;color:#5f6268;font-weight:400;letter-spacing:-0.3px;-webkit-text-stroke:0.2px #5f6268;">$3,000,800</div>
<div class="t" style="left:93.70px;top:1234.20px;font-size:18.67px;color:#5f6268;font-weight:400;-webkit-text-stroke:0.2px #5f6268;">1 Bedroom 1 Bath</div>
<div class="t" style="left:443.50px;top:1234.20px;font-size:18.67px;color:#5f6268;font-weight:400;letter-spacing:-0.3px;-webkit-text-stroke:0.2px #5f6268;">240</div>
<div class="t" style="left:793.50px;top:1234.20px;font-size:18.67px;color:#5f6268;font-weight:400;letter-spacing:-0.3px;-webkit-text-stroke:0.2px #5f6268;">86%</div>
<div class="t" style="left:1143.50px;top:1234.20px;font-size:18.67px;color:#5f6268;font-weight:400;letter-spacing:-0.3px;-webkit-text-stroke:0.2px #5f6268;">75</div>
<div class="t" style="left:1493.50px;top:1234.20px;font-size:18.67px;color:#5f6268;font-weight:400;letter-spacing:-0.3px;-webkit-text-stroke:0.2px #5f6268;">$14,630</div>
<div class="t" style="left:1843.50px;top:1234.20px;font-size:18.67px;color:#5f6268;font-weight:400;letter-spacing:-0.3px;-webkit-text-stroke:0.2px #5f6268;">$194.31</div>
<div class="t" style="left:2193.70px;top:1234.20px;font-size:18.67px;color:#5f6268;font-weight:400;letter-spacing:-0.3px;-webkit-text-stroke:0.2px #5f6268;">$3,511,200</div>
<div class="r" style="left:80.00px;top:1266.40px;width:2400.00px;height:39.70px;background:#f7f8fb"></div>
<div class="t" style="left:93.70px;top:1274.20px;font-size:18.67px;color:#5f6268;font-weight:400;-webkit-text-stroke:0.2px #5f6268;">2 Bedroom 1 Bath</div>
<div class="t" style="left:443.50px;top:1274.20px;font-size:18.67px;color:#5f6268;font-weight:400;letter-spacing:-0.3px;-webkit-text-stroke:0.2px #5f6268;">80</div>
<div class="t" style="left:793.50px;top:1274.20px;font-size:18.67px;color:#5f6268;font-weight:400;letter-spacing:-0.3px;-webkit-text-stroke:0.2px #5f6268;">81%</div>
<div class="t" style="left:1143.50px;top:1274.20px;font-size:18.67px;color:#5f6268;font-weight:400;letter-spacing:-0.3px;-webkit-text-stroke:0.2px #5f6268;">226</div>
<div class="t" style="left:1493.50px;top:1274.20px;font-size:18.67px;color:#5f6268;font-weight:400;letter-spacing:-0.3px;-webkit-text-stroke:0.2px #5f6268;">$51,810</div>
<div class="t" style="left:1843.50px;top:1274.20px;font-size:18.67px;color:#5f6268;font-weight:400;letter-spacing:-0.3px;-webkit-text-stroke:0.2px #5f6268;">$229.37</div>
<div class="t" style="left:2193.70px;top:1274.20px;font-size:18.67px;color:#5f6268;font-weight:400;letter-spacing:-0.3px;-webkit-text-stroke:0.2px #5f6268;">$4,144,800</div>
<div class="t" style="left:93.70px;top:1314.20px;font-size:18.67px;color:#5f6268;font-weight:400;-webkit-text-stroke:0.2px #5f6268;">2 Bedroom 2 Bath</div>
<div class="t" style="left:443.50px;top:1314.20px;font-size:18.67px;color:#5f6268;font-weight:400;letter-spacing:-0.3px;-webkit-text-stroke:0.2px #5f6268;">20</div>
<div class="t" style="left:793.50px;top:1314.20px;font-size:18.67px;color:#5f6268;font-weight:400;letter-spacing:-0.3px;-webkit-text-stroke:0.2px #5f6268;">72%</div>
<div class="t" style="left:1143.50px;top:1314.20px;font-size:18.67px;color:#5f6268;font-weight:400;letter-spacing:-0.3px;-webkit-text-stroke:0.2px #5f6268;">904</div>
<div class="t" style="left:1493.50px;top:1314.20px;font-size:18.67px;color:#5f6268;font-weight:400;letter-spacing:-0.3px;-webkit-text-stroke:0.2px #5f6268;">$135,960</div>
<div class="t" style="left:1843.50px;top:1314.20px;font-size:18.67px;color:#5f6268;font-weight:400;letter-spacing:-0.3px;-webkit-text-stroke:0.2px #5f6268;">$150.48</div>
<div class="t" style="left:2193.70px;top:1314.20px;font-size:18.67px;color:#5f6268;font-weight:400;letter-spacing:-0.3px;-webkit-text-stroke:0.2px #5f6268;">$2,719,200</div>
<div class="r" style="left:80.00px;top:1345.30px;width:2400.00px;height:2.00px;background:#5d6167"></div>
<div class="r" style="left:80.00px;top:1347.30px;width:2400.00px;height:38.30px;background:#f7f8fb"></div>
<div class="r" style="left:80.00px;top:1385.60px;width:2400.00px;height:2.00px;background:#5d6167"></div>
<div class="t" style="left:93.70px;top:1356.90px;font-size:18.67px;color:#55595f;font-weight:400;-webkit-text-stroke:0.45px #55595f;">Total</div>
<div class="t" style="left:443.50px;top:1353.50px;font-size:18.67px;color:#55595f;font-weight:400;-webkit-text-stroke:0.45px #55595f;letter-spacing:-0.3px;">400</div>
<div class="t" style="left:793.50px;top:1353.50px;font-size:18.67px;color:#55595f;font-weight:400;-webkit-text-stroke:0.45px #55595f;letter-spacing:-0.3px;">82%</div>
<div class="t" style="left:1143.50px;top:1353.50px;font-size:18.67px;color:#55595f;font-weight:400;-webkit-text-stroke:0.45px #55595f;letter-spacing:-0.3px;">376</div>
<div class="t" style="left:1493.50px;top:1353.50px;font-size:18.67px;color:#55595f;font-weight:400;-webkit-text-stroke:0.45px #55595f;letter-spacing:-0.3px;">$63,103</div>
<div class="t" style="left:1843.50px;top:1353.50px;font-size:18.67px;color:#55595f;font-weight:400;-webkit-text-stroke:0.45px #55595f;letter-spacing:-0.3px;">$185.06</div>
<div class="t" style="left:2193.70px;top:1353.50px;font-size:18.67px;color:#55595f;font-weight:400;-webkit-text-stroke:0.45px #55595f;letter-spacing:-0.3px;">$13,376,000</div>
<div class="r" style="left:427.63px;top:1185.30px;width:1.33px;height:160.00px;background:#eceef1"></div>
<div class="r" style="left:427.63px;top:1347.30px;width:1.33px;height:38.30px;background:#eceef1"></div>
<div class="r" style="left:777.63px;top:1185.30px;width:1.33px;height:160.00px;background:#eceef1"></div>
<div class="r" style="left:777.63px;top:1347.30px;width:1.33px;height:38.30px;background:#eceef1"></div>
<div class="r" style="left:1127.63px;top:1185.30px;width:1.33px;height:160.00px;background:#eceef1"></div>
<div class="r" style="left:1127.63px;top:1347.30px;width:1.33px;height:38.30px;background:#eceef1"></div>
<div class="r" style="left:1477.63px;top:1185.30px;width:1.33px;height:160.00px;background:#eceef1"></div>
<div class="r" style="left:1477.63px;top:1347.30px;width:1.33px;height:38.30px;background:#eceef1"></div>
<div class="r" style="left:1827.63px;top:1185.30px;width:1.33px;height:160.00px;background:#eceef1"></div>
<div class="r" style="left:1827.63px;top:1347.30px;width:1.33px;height:38.30px;background:#eceef1"></div>
<div class="r" style="left:2177.83px;top:1185.30px;width:1.33px;height:160.00px;background:#eceef1"></div>
<div class="r" style="left:2177.83px;top:1347.30px;width:1.33px;height:38.30px;background:#eceef1"></div>
<div class="r" style="left:27.00px;top:1356.20px;width:50.00px;height:50.00px;background:#4264a6;border-radius:50%;box-shadow:0 2px 6px rgba(0,0,0,0.25)"></div>
<svg class="r" style="left:38px;top:1367px" width="28" height="28" viewBox="0 0 28 28"><path d="M4.6 19.4 L15.9 7.7 L21.1 12.9 L10.6 24.95 L4.6 24.95 Z" fill="#fff"/><path d="M16.9 6.7 L18.8 4.8 Q20 3.6 21.2 4.8 L24.5 8.1 Q25.7 9.3 24.5 10.5 L22.1 12.9 Z" fill="#fff"/><path d="M9.2 17.4 L15.6 11.2" stroke="#4264a6" stroke-width="0.9"/><path d="M7.2 19.7 L9.2 21.9" stroke="#4264a6" stroke-width="1.8" stroke-linecap="round"/></svg>
<div class="r" style="left:2547.00px;top:73.00px;width:13.00px;height:1367.00px;background:linear-gradient(to right, rgba(0,0,0,0) 0%, rgba(0,0,0,0.035) 40%, rgba(0,0,0,0.07) 100%)"></div>
</div>
</body></html>
